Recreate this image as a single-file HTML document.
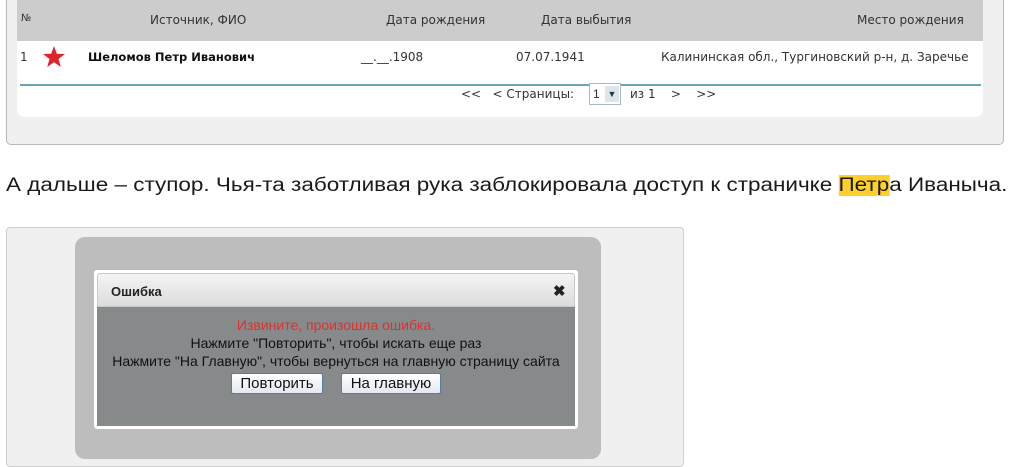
<!DOCTYPE html>
<html><head><meta charset="utf-8"><style>
*{margin:0;padding:0;box-sizing:border-box}
body{width:1021px;height:461px;background:#fff;position:relative;overflow:hidden;font-family:"Liberation Sans",sans-serif}
.abs{position:absolute;white-space:nowrap}
.p1{left:6px;top:-5px;width:998px;height:150px;background:#f0f0f0;border:1px solid #b8b8b8;border-radius:5px}
.inner{left:17px;top:0;width:966px;height:117px;background:#fff;border-radius:0 0 8px 8px}
.hdr{left:17px;top:0;width:966px;height:41px;background:#cccccc}
.t{font-size:12px;color:#333;font-family:"DejaVu Sans",sans-serif}
.line{left:20px;top:84px;width:961px;height:2px;background:#6aa6b8}
.p2{left:6px;top:227px;width:678px;height:240px;background:#f0f0f0;border:1px solid #cfcfcf;border-radius:4px}
.gray{left:75px;top:237px;width:526px;height:222px;background:#bdbdbd;border-radius:10px}
.dlg{left:94px;top:270px;width:484px;height:159px;background:#fff;border-radius:3px}
.tb{left:97px;top:273px;width:478px;height:34px;background:linear-gradient(#f4f4f4,#dcdcdc);border-radius:3px 3px 0 0;border:1px solid #c8c8c8}
.bd{left:97px;top:307px;width:478px;height:119px;background:#868a8a}
.c{font-size:14px;color:#111;text-align:center;width:478px;left:97px}
.btn{top:373px;height:21px;border:1px solid #5b7aa8;border-radius:2px;background:linear-gradient(#fff,#e4e8f0);font-size:15px;color:#111;text-align:center;line-height:19px}
</style></head><body>
<div class="abs p1"></div>
<div class="abs inner"></div>
<div class="abs hdr"></div>
<div class="abs t" style="left:21px;top:13px;font-size:10px">№</div>
<div class="abs t" style="left:150px;top:13px">Источник, ФИО</div>
<div class="abs t" style="left:386px;top:13px">Дата рождения</div>
<div class="abs t" style="left:541px;top:13px">Дата выбытия</div>
<div class="abs t" style="left:857px;top:13px">Место рождения</div>
<div class="abs t" style="left:20px;top:50px">1</div>
<svg class="abs" style="left:42px;top:45px" width="24" height="24" viewBox="0 0 24 24"><polygon points="12,1 14.8,8.8 23,9 16.5,14 18.8,22 12,17.3 5.2,22 7.5,14 1,9 9.2,8.8" fill="#e0242b"/></svg>
<div class="abs t" style="left:88px;top:50px;font-weight:bold;color:#111;font-size:11.5px">Шеломов Петр Иванович</div>
<div class="abs t" style="left:361px;top:50px">__.__.1908</div>
<div class="abs t" style="left:516px;top:50px">07.07.1941</div>
<div class="abs t" style="left:661px;top:50px">Калининская обл., Тургиновский р-н, д. Заречье</div>
<div class="abs line"></div>
<div class="abs t" style="left:461px;top:87px">&lt;&lt;&nbsp;&nbsp;&nbsp;&lt; Страницы:</div>
<div class="abs" style="left:589px;top:83px;width:32px;height:22px;border:1px solid #a8b8c8;background:#fff;font-size:12px;color:#333;padding:3px 0 0 3px">1<span style="position:absolute;right:1px;top:2px;width:14px;height:16px;background:#dde4ec;font-size:9px;text-align:center;line-height:16px;color:#234">▼</span></div>
<div class="abs t" style="left:630px;top:87px">из 1&nbsp;&nbsp;&nbsp;&nbsp;&gt;&nbsp;&nbsp;&nbsp;&nbsp;&gt;&gt;</div>
<div class="abs" style="left:6px;top:175px;font-size:19px;color:#1a1a1a;transform:scaleX(1.183);transform-origin:0 0">А дальше – ступор. Чья-та заботливая рука заблокировала доступ к страничке <span style="background:#ffd02c">Петр</span>а Иваныча.</div>
<div class="abs p2"></div>
<div class="abs gray"></div>
<div class="abs dlg"></div>
<div class="abs tb"></div>
<div class="abs" style="left:111px;top:284px;font-size:13px;font-weight:bold;color:#222">Ошибка</div>
<div class="abs" style="left:553px;top:282px;font-size:15px;font-weight:bold;color:#222">✖</div>
<div class="abs bd"></div>
<div class="abs c" style="top:317px;color:#e03030">Извините, произошла ошибка.</div>
<div class="abs c" style="top:335px">Нажмите "Повторить", чтобы искать еще раз</div>
<div class="abs c" style="top:353px">Нажмите "На Главную", чтобы вернуться на главную страницу сайта</div>
<div class="abs btn" style="left:231px;width:92px">Повторить</div>
<div class="abs btn" style="left:341px;width:100px">На главную</div>
</body></html>
